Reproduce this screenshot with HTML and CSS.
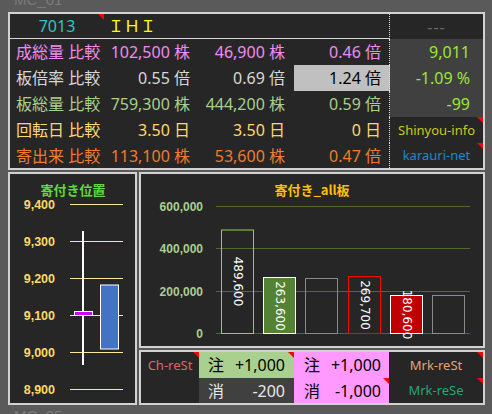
FILE: index.html
```html
<!DOCTYPE html>
<html lang="ja">
<head>
<meta charset="utf-8">
<title>MC_01</title>
<link rel="stylesheet" href="styles.css">
</head>
<body>
<div class="wm wm-top">MC_01</div>
<section class="quote">
  <div class="c hd center code tri">7013</div>
  <div class="c hd name span3">ＩＨＩ</div>
  <div class="c side dash center">---</div>

  <div class="c lbl pink">成総量 比較</div>
  <div class="c v1 pink">102,500 株</div>
  <div class="c v2 pink">46,900 株</div>
  <div class="c v3 pink">0.46 倍</div>
  <div class="c side num">9,011</div>

  <div class="c lbl gray">板倍率 比較</div>
  <div class="c v1 gray">0.55 倍</div>
  <div class="c v2 gray">0.69 倍</div>
  <div class="c v3 hl">1.24 倍</div>
  <div class="c side num">-1.09 %</div>

  <div class="c lbl green">板総量 比較</div>
  <div class="c v1 green">759,300 株</div>
  <div class="c v2 green">444,200 株</div>
  <div class="c v3 green">0.59 倍</div>
  <div class="c side num">-99</div>

  <div class="c lbl yellow">回転日 比較</div>
  <div class="c v1 yellow">3.50 日</div>
  <div class="c v2 yellow">3.50 日</div>
  <div class="c v3 yellow">0 日</div>
  <div class="c side link center shinyou tri">Shinyou-info</div>

  <div class="c lbl orange">寄出来 比較</div>
  <div class="c v1 orange">113,100 株</div>
  <div class="c v2 orange">53,600 株</div>
  <div class="c v3 orange">0.47 倍</div>
  <div class="c side link center karauri tri">karauri-net</div>
</section>

<div class="lower">
  <section class="pos">
    <svg class="pos-svg" width="125" height="229" viewBox="0 0 125 229">
      <text class="pos-title" x="63" y="15">寄付き位置</text>
      <g class="pgrid">
        <line x1="60" x2="113" y1="30.5" y2="30.5"/>
        <line x1="60" x2="113" y1="67.5" y2="67.5"/>
        <line x1="60" x2="113" y1="104.5" y2="104.5"/>
        <line x1="60" x2="113" y1="141.5" y2="141.5"/>
        <line x1="60" x2="113" y1="178.5" y2="178.5"/>
        <line x1="60" x2="113" y1="215.5" y2="215.5"/>
      </g>
      <g class="plabel">
        <text x="45" y="31">9,400</text>
        <text x="45" y="68">9,300</text>
        <text x="45" y="105">9,200</text>
        <text x="45" y="142">9,100</text>
        <text x="45" y="179">9,000</text>
        <text x="45" y="216">8,900</text>
      </g>
      <rect x="72" y="57" width="2" height="134" fill="#ffffff"/>
      <rect x="64.5" y="137.5" width="18" height="4" fill="#cc00ff" stroke="#ffffff" stroke-width="1"/>
      <rect x="90.5" y="111" width="18" height="64" fill="#4472c4" stroke="#ffffff" stroke-width="1"/>
    </svg>
  </section>
  <div class="rcol">
    <section class="chart">
      <svg class="chart-svg" width="342" height="172" viewBox="0 0 342 172">
        <text class="chart-title" x="171" y="15">寄付き_all板</text>
        <g class="cgrid">
          <line x1="75" x2="329" y1="32.5" y2="32.5"/>
          <line x1="75" x2="329" y1="74.5" y2="74.5"/>
          <line x1="75" x2="329" y1="117.5" y2="117.5"/>
          <line x1="75" x2="329" y1="159.5" y2="159.5"/>
        </g>
        <g class="clabel">
          <text x="62" y="33">600,000</text>
          <text x="62" y="75">400,000</text>
          <text x="62" y="118">200,000</text>
          <text x="62" y="160">0</text>
        </g>
        <rect x="80.5" y="56" width="32" height="103.5" fill="none" stroke="#92d050"/>
        <rect x="122.5" y="103.5" width="32" height="56" fill="#548235" stroke="#ffffff"/>
        <rect x="164.5" y="104.5" width="32" height="55" fill="none" stroke="#8a8a8a"/>
        <rect x="207.5" y="102.5" width="32" height="57" fill="none" stroke="#ff0000"/>
        <rect x="249.5" y="121.5" width="32" height="38" fill="#c00000" stroke="#ffffff"/>
        <rect x="291.5" y="121.5" width="32" height="38" fill="none" stroke="#8a8a8a"/>
        <g class="barval">
          <text x="96.5" y="107.5" transform="rotate(90 96.5 107.5)">489,600</text>
          <text x="138.5" y="132" transform="rotate(90 138.5 132)">263,600</text>
          <text x="223.5" y="131" transform="rotate(90 223.5 131)">269,700</text>
          <text x="265.5" y="140.5" transform="rotate(90 265.5 140.5)">180,600</text>
        </g>
      </svg>
    </section>
    <section class="orders">
      <div class="o o-lbl ch tri">Ch-reSt</div>
      <div class="o o-val ogreen tri"><span>注</span><span>+1,000</span></div>
      <div class="o o-val opink"><span>注</span><span>+1,000</span></div>
      <div class="o o-lbl mrk1 tri">Mrk-reSt</div>
      <div class="o"></div>
      <div class="o o-val ogray"><span>消</span><span>-200</span></div>
      <div class="o o-val opink tri"><span>消</span><span>-1,000</span></div>
      <div class="o o-lbl mrk2 tri">Mrk-reSe</div>
    </section>
  </div>
</div>
<div class="wm wm-bottom">MC_05</div>
</body>
</html>
```

FILE: styles.css
```css
html, body {
  margin: 0;
  padding: 0;
  background: #5a5a5a;
  overflow: hidden;
}
body {
  font-family: "Noto Sans", "Noto Sans CJK JP", sans-serif;
  font-size: 16px;
}

.wm {
  font: 15px/15px "Liberation Sans", sans-serif;
  color: #7a7a7a;
  padding-left: 14px;
  height: 15px;
}
.wm-top { margin-top: -8px; margin-bottom: 5px; }
.wm-bottom { margin-top: 3px; }

/* ---------- top quote table ---------- */
.quote {
  margin-left: 8px;
  width: 477px;
  height: 158px;
  box-sizing: border-box;
  border: 2px solid #d2d2d2;
  background: #262626;
  display: grid;
  grid-template-columns: 94px 96px 94px 96px 93px;
  grid-template-rows: 25px 26px 26px 26px 26px 25px;
}
.c {
  position: relative;
  display: flex;
  align-items: center;
  justify-content: flex-end;
  box-sizing: border-box;
  line-height: 1;
  white-space: nowrap;
}
.c.center { justify-content: center; }
.hd { border-bottom: 1px solid #d9d9d9; }
.span3 { grid-column: 2 / 5; }
.name {
  justify-content: flex-start;
  padding-left: 4px;
  color: #ffff00;
  border-right: 1px dotted #e0e0e0;
}
.code { color: #33c2c2; }
.dash { color: #6a6a6a; letter-spacing: 1px; }
.lbl { justify-content: flex-start; padding-left: 6px; }
.v1 { padding-right: 10px; }
.v2 { padding-right: 9px; }
.v3 { padding-right: 8px; border-right: 1px dotted #e0e0e0; }
.side { background: #262626; }
.num { background: #404040; color: #9be63a; padding-right: 13px; }
.link { font-size: 13px; }
.shinyou { color: #c8c81e; }
.karauri { color: #2089c8; }
.hl { background: #c0c0c0; color: #000000; }

.pink { color: #f08cf0; }
.gray { color: #d8d8d8; }
.green { color: #a8d08d; }
.yellow { color: #ffd966; }
.orange { color: #f07c2c; }

.tri::after {
  content: "";
  position: absolute;
  top: 0;
  right: 0;
  width: 0;
  height: 0;
  border-style: solid;
  border-width: 0 6px 6px 0;
  border-color: transparent #ff0000 transparent transparent;
}

/* ---------- lower area ---------- */
.lower {
  margin-top: 2px;
  margin-left: 8px;
  width: 477px;
  height: 233px;
  display: flex;
  gap: 2px;
}
.pos {
  width: 129px;
  box-sizing: border-box;
  border: 2px solid #d2d2d2;
  background: #262626;
}
.pos-svg, .chart-svg { display: block; overflow: visible; }
.pos-title {
  font-family: "Noto Sans CJK JP", sans-serif;
  font-size: 13px;
  font-weight: bold;
  fill: #5fd93c;
  text-anchor: middle;
  dominant-baseline: central;
}
.pgrid line { stroke: #ffe699; stroke-width: 1; }
.plabel text {
  font-family: "Liberation Sans", sans-serif;
  font-size: 12.5px;
  font-weight: bold;
  fill: #ffd966;
  text-anchor: end;
  dominant-baseline: central;
}

.rcol {
  flex: 1;
  display: flex;
  flex-direction: column;
  gap: 2px;
}
.chart {
  height: 176px;
  box-sizing: border-box;
  border: 2px solid #d2d2d2;
  background: #262626;
}
.chart-title {
  font-family: "Noto Sans CJK JP", sans-serif;
  font-size: 13px;
  font-weight: bold;
  fill: #ffc000;
  text-anchor: middle;
  dominant-baseline: central;
}
.cgrid line { stroke: #4f6a2c; stroke-width: 1; }
.clabel text {
  font-family: "Liberation Sans", sans-serif;
  font-size: 12px;
  font-weight: bold;
  fill: #a9d08e;
  text-anchor: end;
  dominant-baseline: central;
}
.barval text {
  font-family: "DejaVu Sans", sans-serif;
  font-size: 12px;
  fill: #ffffff;
  text-anchor: middle;
  dominant-baseline: central;
}

.orders {
  flex: 1;
  box-sizing: border-box;
  border: 2px solid #d2d2d2;
  background: #262626;
  display: grid;
  grid-template-columns: 58px 95px 95px 1fr;
  grid-template-rows: 26px 1fr;
}
.o {
  position: relative;
  display: flex;
  align-items: center;
  line-height: 1;
  white-space: nowrap;
}
.o-lbl { justify-content: center; font-size: 13px; }
.o-val { justify-content: space-between; padding: 0 9px 0 9px; }
.ch { color: #e06464; }
.mrk1 { color: #e3a57a; }
.mrk2 { color: #22aa6e; }
.ogreen { background: #a9d08e; color: #000000; }
.ogray { background: #404040; color: #e8e8e8; }
.opink { background: #ff99ff; color: #000000; padding-left: 10px; padding-right: 8px; }
```
